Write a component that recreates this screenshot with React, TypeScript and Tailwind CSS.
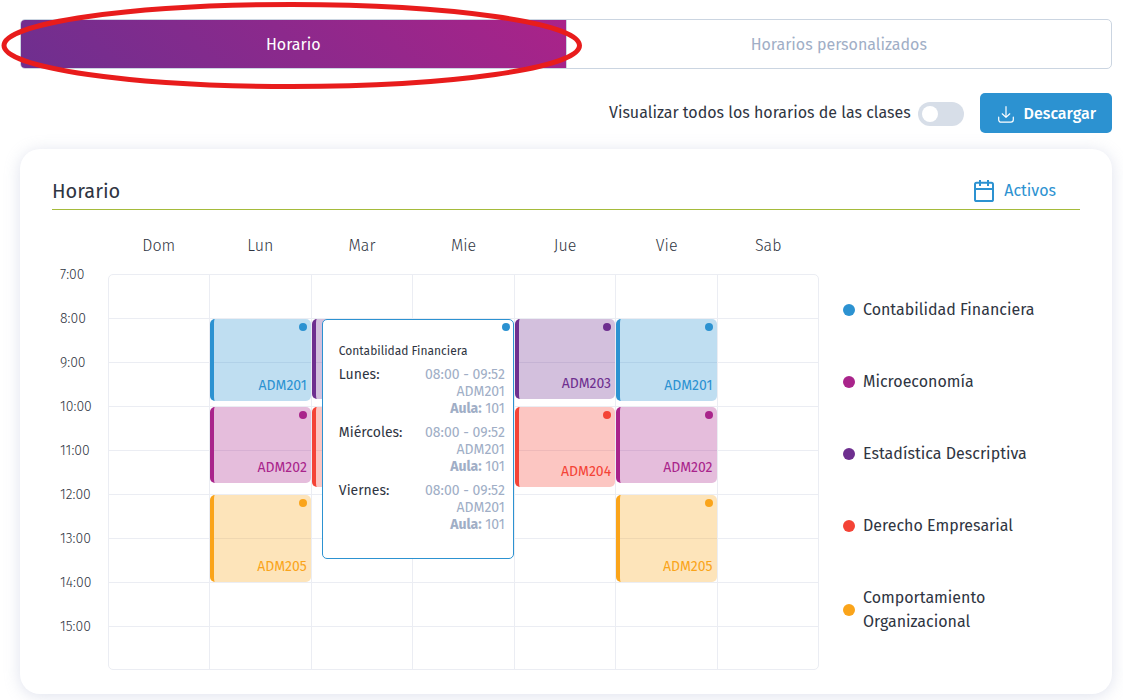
import { useState } from 'react';
import clsx from 'clsx';

type CourseKey = 'contabilidad' | 'micro' | 'estadistica' | 'derecho' | 'comportamiento';

interface ClassBlock {
  course: CourseKey;
  start: number;
  // length in minutes
  duration: number;
  code?: string;
}

const COURSES: { key: CourseKey; name: string }[] = [
  { key: 'contabilidad', name: 'Contabilidad Financiera' },
  { key: 'micro', name: 'Microeconomía' },
  { key: 'estadistica', name: 'Estadística Descriptiva' },
  { key: 'derecho', name: 'Derecho Empresarial' },
  { key: 'comportamiento', name: 'Comportamiento Organizacional' },
];

const DOT_COLORS: Record<CourseKey, string> = {
  contabilidad: 'bg-[#2c92d1]',
  micro: 'bg-[#a9248b]',
  estadistica: 'bg-[#6e2f8f]',
  derecho: 'bg-[#f44336]',
  comportamiento: 'bg-[#faa41a]',
};

const BLOCK_COLORS: Record<CourseKey, string> = {
  contabilidad: 'border-[#2c92d1] bg-[#2c92d1]/30 text-[#2c92d1]',
  micro: 'border-[#a9248b] bg-[#a9248b]/30 text-[#a9248b]',
  estadistica: 'border-[#6e2f8f] bg-[#6e2f8f]/30 text-[#6e2f8f]',
  derecho: 'border-[#f44336] bg-[#f44336]/30 text-[#f44336]',
  comportamiento: 'border-[#faa41a] bg-[#faa41a]/30 text-[#faa41a]',
};

const FIRST_HOUR = 7;
const HOUR_HEIGHT = 44;
const HOURS = [7, 8, 9, 10, 11, 12, 13, 14, 15];

const MONDAY: ClassBlock[] = [
  { course: 'contabilidad', start: 8, duration: 112, code: 'ADM201' },
  { course: 'micro', start: 10, duration: 104, code: 'ADM202' },
  { course: 'comportamiento', start: 12, duration: 119, code: 'ADM205' },
];

const DAYS: { name: string; blocks: ClassBlock[] }[] = [
  { name: 'Dom', blocks: [] },
  { name: 'Lun', blocks: MONDAY },
  {
    name: 'Mar',
    blocks: [
      { course: 'estadistica', start: 8, duration: 109 },
      { course: 'derecho', start: 10, duration: 109 },
    ],
  },
  { name: 'Mie', blocks: [] },
  {
    name: 'Jue',
    blocks: [
      { course: 'estadistica', start: 8, duration: 109, code: 'ADM203' },
      { course: 'derecho', start: 10, duration: 109, code: 'ADM204' },
    ],
  },
  { name: 'Vie', blocks: MONDAY },
  { name: 'Sab', blocks: [] },
];

const SESSIONS = ['Lunes:', 'Miércoles:', 'Viernes:'];

function DownloadIcon() {
  return (
    <svg viewBox="0 0 16 17" className="h-[17px] w-4" fill="none" stroke="currentColor" strokeWidth="1.2" strokeLinecap="round" strokeLinejoin="round" aria-hidden="true">
      <path d="M8 .7v10.6M4.2 7.8 8 11.4l3.8-3.6M.7 11.2v2.6a2.4 2.4 0 0 0 2.4 2.4h9.8a2.4 2.4 0 0 0 2.4-2.4v-2.6" />
    </svg>
  );
}

function CalendarIcon() {
  return (
    <svg viewBox="0 0 22 22" className="size-[22px]" fill="none" stroke="currentColor" strokeWidth="2" aria-hidden="true">
      <rect x="2" y="2.8" width="18" height="18.2" rx="1.6" />
      <path d="M2 9h18M7 0v6M15 0v6" />
    </svg>
  );
}

function ClassCard({ block, offset }: { block: ClassBlock; offset: number }) {
  const height = Math.round((block.duration * HOUR_HEIGHT) / 60);
  return (
    <div
      className={clsx('flex flex-col items-end justify-between rounded-[5px] border-l-4 pt-1 pr-1 pb-[5px]', BLOCK_COLORS[block.course])}
      style={{ height, marginTop: offset }}
    >
      {block.code && (
        <>
          <span className={clsx('size-2 rounded-full', DOT_COLORS[block.course])} />
          <span className="text-sm leading-5">{block.code}</span>
        </>
      )}
    </div>
  );
}

function DayColumn({ blocks, children }: { blocks: ClassBlock[]; children?: React.ReactNode }) {
  let cursor = 0;
  return (
    <div className="relative grid min-w-0 flex-1 border-r border-[#ebedf3] last:border-r-0">
      <div className="col-start-1 row-start-1">
        {HOURS.map((hour) => (
          <div key={hour} className="h-11 border-b border-[#ebedf3] last:h-[42px] last:border-b-0" />
        ))}
      </div>
      <div className="col-start-1 row-start-1">
        {blocks.map((block) => {
          const top = (block.start - FIRST_HOUR) * HOUR_HEIGHT;
          const offset = top - cursor;
          cursor = top + Math.round((block.duration * HOUR_HEIGHT) / 60);
          return <ClassCard key={block.start} block={block} offset={offset} />;
        })}
      </div>
      {children}
    </div>
  );
}

function ClassPopover() {
  return (
    <div className="absolute top-11 left-[10px] z-10 h-60 w-48 rounded-[5px] border border-[#2c92d1] bg-white pt-[21px] pr-2 pl-4">
      <span className="absolute top-[3px] right-[3px] size-2 rounded-full bg-[#2c92d1]" />
      <h3 className="text-xs leading-5 text-[#2f3542]">Contabilidad Financiera</h3>
      <dl className="mt-[5px] flex flex-col gap-[7px] text-sm leading-[17px]">
        {SESSIONS.map((day) => (
          <div key={day} className="flex justify-between">
            <dt className="text-[#2f3542]">{day}</dt>
            <dd className="text-right text-[#a0aec6]">
              08:00 - 09:52
              <br />
              ADM201
              <br />
              <b className="font-bold">Aula:</b> 101
            </dd>
          </div>
        ))}
      </dl>
    </div>
  );
}

export default function App() {
  const [showAll, setShowAll] = useState(false);

  return (
    <main className="bg-white pt-[19px] pr-[11px] pb-1.5 pl-5 font-['Fira_Sans','Roboto',sans-serif] text-base text-[#2f3542]">
      {/* Tabs */}
      <nav className="flex h-[50px] rounded-[5px] border border-[#cbd5e1]">
        <div className="relative flex-1">
          <button className="h-full w-full rounded-l-[4px] bg-linear-[45deg] from-[#6e2f8f] to-[#aa2389] pt-0.5 text-white">
            Horario
          </button>
          <svg
            className="pointer-events-none absolute -top-[18px] -left-5 h-[87px] w-[calc(100%+37px)]"
            viewBox="0 0 580 86"
            preserveAspectRatio="none"
            fill="none"
            aria-hidden="true"
          >
            <ellipse cx="290" cy="43" rx="287" ry="40.5" stroke="#e81c1c" strokeWidth="5" vectorEffect="non-scaling-stroke" />
          </svg>
        </div>
        <button className="flex-1 border-l border-[#cbd5e1] pt-0.5 text-[#a0aec6]">Horarios personalizados</button>
      </nav>

      {/* Toolbar */}
      <div className="mt-6 flex items-center justify-end gap-4">
        <div className="flex items-center gap-[7px]">
          <label htmlFor="show-all">Visualizar todos los horarios de las clases</label>
          <input
            id="show-all"
            type="checkbox"
            checked={showAll}
            onChange={(e) => setShowAll(e.target.checked)}
            className="mt-0.5 h-6 w-[46px] cursor-pointer appearance-none rounded-full bg-[#d7dee8] p-1 before:block before:size-4 before:rounded-full before:bg-white checked:bg-[#2c92d1] checked:before:ml-auto"
          />
        </div>
        <button className="flex h-10 items-center gap-[10px] rounded-[5px] bg-[#2c92d1] pt-0.5 pr-4 pl-[18px] font-medium text-white">
          <DownloadIcon />
          Descargar
        </button>
      </div>

      {/* Schedule card */}
      <section className="mt-4 rounded-[20px] bg-white px-8 pt-[30px] pb-6 shadow-[0_2px_16px_rgba(150,160,195,0.3)]">
        <header className="flex items-center justify-between border-b border-[#a5bb3b] pr-6 pb-1.5">
          <h2 className="text-xl leading-6">Horario</h2>
          <a href="#activos" className="flex items-center gap-[9px] leading-6 text-[#2c92d1]">
            <CalendarIcon />
            Activos
          </a>
        </header>

        <div className="flex">
          <div className="w-14 shrink-0 pt-[55px] pl-2 text-sm leading-5 font-light">
            {HOURS.map((hour) => (
              <div key={hour} className="h-11 last:h-5">
                {hour}:00
              </div>
            ))}
          </div>

          <div className="min-w-0 flex-1">
            <div className="flex h-16 items-center pt-2 font-light">
              {DAYS.map((day) => (
                <div key={day.name} className="flex-1 text-center">
                  {day.name}
                </div>
              ))}
            </div>
            <div className="flex rounded-[5px] border border-[#ebedf3]">
              {DAYS.map((day) => (
                <DayColumn key={day.name} blocks={day.blocks}>
                  {day.name === 'Mar' && <ClassPopover />}
                </DayColumn>
              ))}
            </div>
          </div>

          {/* Legend */}
          <ul className="flex w-[261px] shrink-0 flex-col gap-12 pt-22 pr-10 pl-6">
            {COURSES.map((course) => (
              <li key={course.key} className="flex items-center gap-2">
                <span className={clsx('size-3 shrink-0 rounded-full', DOT_COLORS[course.key])} />
                {course.name}
              </li>
            ))}
          </ul>
        </div>
      </section>
    </main>
  );
}
